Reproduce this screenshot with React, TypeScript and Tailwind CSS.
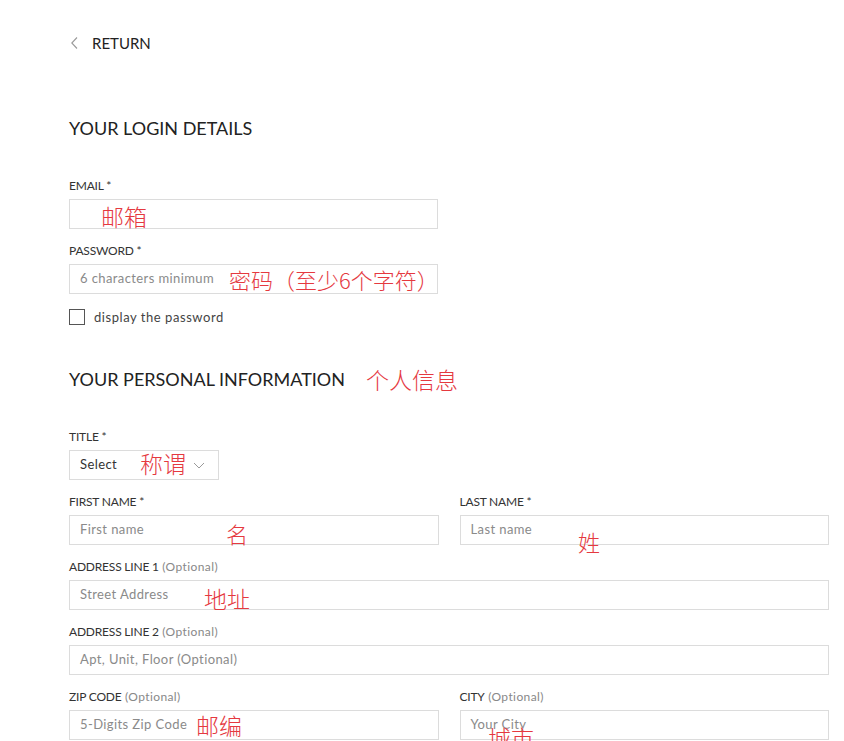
import React from "react";

const base = "font-['Lato','Noto_Sans_CJK_SC',sans-serif]";

function Label({ text, optional }: { text: string; optional?: boolean }) {
  return (
    <div className="h-[14px] leading-[14px] text-[12px] text-[#333] mb-[6px] tracking-[-0.2px]">
      {text}
      {optional ? <span className="text-[#888] tracking-[0.4px]"> (Optional)</span> : <span> *</span>}
    </div>
  );
}

function Input({ placeholder }: { placeholder?: string }) {
  return (
    <div className="h-[30px] border border-[#dcdcdc] flex items-center pl-[10px] text-[13px] tracking-[0.4px] text-[#8a8a8a]">
      {placeholder}
    </div>
  );
}

function Field({ label, optional, placeholder, className }: { label: string; optional?: boolean; placeholder?: string; className?: string }) {
  return (
    <div className={className}>
      <Label text={label} optional={optional} />
      <Input placeholder={placeholder} />
    </div>
  );
}

function Note({ text, x, y, size = 22 }: { text: string; x: number; y: number; size?: number }) {
  return (
    <div
      className="absolute font-['Noto_Sans_CJK_SC',sans-serif] font-light text-[#e5393f] leading-none whitespace-nowrap"
      style={{ left: x, top: y - size / 2, fontSize: size }}
    >
      {text}
    </div>
  );
}

export default function App() {
  return (
    <div className={`${base} relative min-h-[741px] w-[844px] overflow-hidden bg-white pl-[69px] pt-[35px]`}>
      {/* Return */}
      <div className="flex items-center h-[16px] gap-[13px] text-[#222]">
        <svg width="9" height="14" viewBox="0 0 9 14" className="ml-[1px]">
          <path d="M7 1.5 L1.8 7 L7 12.5" fill="none" stroke="#9a9a9a" strokeWidth="1.1" />
        </svg>
        <span className="text-[15px] leading-[16px]">RETURN</span>
      </div>

      {/* Login details */}
      <h2 className="mt-[67px] h-[20px] leading-[20px] text-[18px] text-[#222] font-normal">YOUR LOGIN DETAILS</h2>

      <div className="mt-[41px] w-[369px]">
        <Field label="EMAIL" />
        <Field label="PASSWORD" placeholder="6 characters minimum" className="mt-[15px]" />
        <div className="mt-[15px] flex items-center h-[16px] gap-[9px]">
          <div className="w-[16px] h-[16px] border border-[#555] bg-white" />
          <span className="text-[13px] text-[#444] leading-[16px] tracking-[0.55px]">display the password</span>
        </div>
      </div>

      {/* Personal information */}
      <h2 className="mt-[44px] h-[20px] leading-[20px] text-[18px] text-[#222] font-normal">YOUR PERSONAL INFORMATION</h2>

      <div className="mt-[41px] w-[760px]">
        <div>
          <Label text="TITLE" />
          <div className="w-[150px] h-[30px] border border-[#dcdcdc] flex items-center justify-between pl-[10px] pr-[13px] text-[13px] tracking-[0.4px] text-[#333]">
            <span>Select</span>
            <svg width="12" height="7" viewBox="0 0 12 7">
              <path d="M1 1 L6 6 L11 1" fill="none" stroke="#9a9a9a" strokeWidth="1" />
            </svg>
          </div>
        </div>

        <div className="mt-[15px] grid grid-cols-2 gap-x-[21px] gap-y-[15px]">
          <Field label="FIRST NAME" placeholder="First name" />
          <Field label="LAST NAME" placeholder="Last name" />
          <Field label="ADDRESS LINE 1" optional placeholder="Street Address" className="col-span-2" />
          <Field label="ADDRESS LINE 2" optional placeholder="Apt, Unit, Floor (Optional)" className="col-span-2" />
          <Field label="ZIP CODE" optional placeholder="5-Digits Zip Code" />
          <Field label="CITY" optional placeholder="Your City" />
        </div>
      </div>

      {/* Red annotations */}
      <Note text="邮箱" x={101} y={216} size={23} />
      <Note text="密码（至少6个字符）" x={229} y={279} size={22} />
      <Note text="个人信息" x={366} y={379} size={23} />
      <Note text="称谓" x={140} y={463} size={23} />
      <Note text="名" x={226} y={533} size={22} />
      <Note text="姓" x={578} y={541} size={22} />
      <Note text="地址" x={204} y={598} size={23} />
      <Note text="邮编" x={196} y={725} size={23} />
      <Note text="城市" x={488} y={737} size={23} />
    </div>
  );
}
